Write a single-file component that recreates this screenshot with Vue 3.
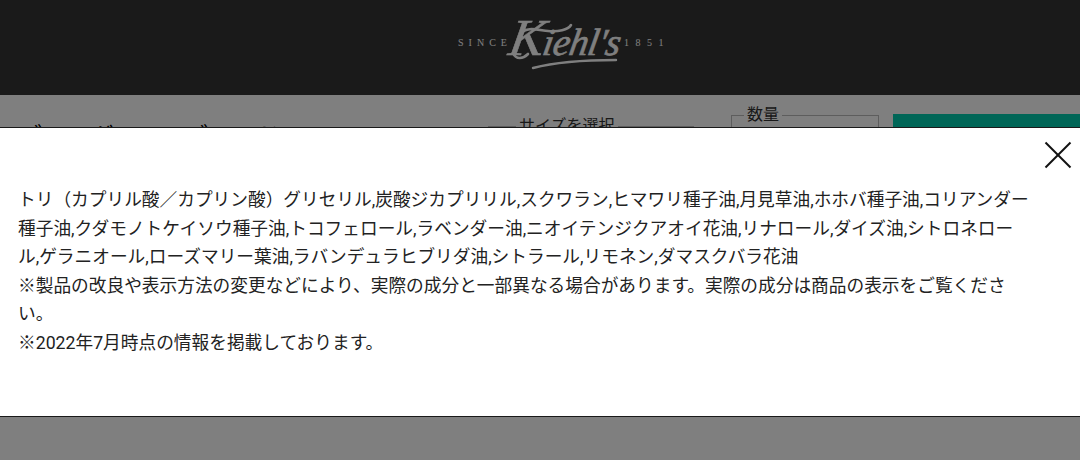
<template>
  <div class="page">
    <header class="site-header">
      <span class="since">SINCE</span>
      <div class="logo">
        <span class="logo-name"><span class="logo-cap">K</span>iehl's</span>
        <svg class="logo-swash" width="120" height="60" viewBox="0 0 120 60" fill="none">
          <path d="M10 18C15 10 27 14 37 15C47 16 57 14 60 9" stroke="currentColor" stroke-width="2.6" stroke-linecap="round" />
          <path d="M2 37C5 44 12 43 17 38" stroke="currentColor" stroke-width="2.6" stroke-linecap="round" />
          <path d="M22 52C45 46 78 44 105 44" stroke="currentColor" stroke-width="2.4" stroke-linecap="round" />
        </svg>
      </div>
      <span class="since year">1851</span>
    </header>

    <main class="product">
      <h1 class="product-name">ブルーグリーンブレンド</h1>
      <div class="product-actions">
        <fieldset class="picker picker-size">
          <legend>サイズを選択</legend>
        </fieldset>
        <fieldset class="picker picker-qty">
          <legend>数量</legend>
        </fieldset>
        <button class="cart-btn" type="button"></button>
      </div>
    </main>

    <div class="overlay">
      <div class="modal">
        <button class="close-btn" type="button" aria-label="閉じる">
          <svg width="28" height="28" viewBox="0 0 28 28" fill="none" stroke="currentColor" stroke-width="2">
            <line x1="1.5" y1="1.5" x2="26.5" y2="26.5"></line>
            <line x1="26.5" y1="1.5" x2="1.5" y2="26.5"></line>
          </svg>
        </button>
        <p class="modal-text">
          トリ（カプリル酸／カプリン酸）グリセリル,炭酸ジカプリリル,スクワラン,ヒマワリ種子油,月見草油,ホホバ種子油,コリアンダー種子油,クダモノトケイソウ種子油,トコフェロール,ラベンダー油,ニオイテンジクアオイ花油,リナロール,ダイズ油,シトロネロール,ゲラニオール,ローズマリー葉油,ラバンデュラヒブリダ油,シトラール,リモネン,ダマスクバラ花油<br />
          ※製品の改良や表示方法の変更などにより、実際の成分と一部異なる場合があります。実際の成分は商品の表示をご覧ください。<br />
          ※2022年7月時点の情報を掲載しております。
        </p>
      </div>
    </div>
  </div>
</template>

<script setup>
</script>

<style>
html,
body {
  margin: 0;
  background: #fff;
}
</style>

<style scoped>
.page {
  position: relative;
  width: 1080px;
  height: 460px;
  overflow: hidden;
  background: #fff;
  font-family: Roboto, "Noto Sans CJK JP", sans-serif;
  color: #222;
}

.site-header {
  height: 95px;
  background: #343434;
  color: #fff;
  display: flex;
  align-items: center;
  justify-content: center;
  gap: 2px;
  padding: 0 0 11px 48px;
  box-sizing: border-box;
}

.since {
  font-family: "Liberation Serif", serif;
  font-size: 10px;
  letter-spacing: 5px;
  padding-top: 1px;
}

.year {
  letter-spacing: 6.5px;
}

.logo {
  position: relative;
  width: 108px;
  height: 52px;
  display: flex;
  align-items: center;
  justify-content: center;
}

.logo-name {
  font-family: "Liberation Serif", serif;
  font-style: italic;
  font-weight: 400;
  font-size: 38px;
  line-height: 1;
  letter-spacing: -0.5px;
  white-space: nowrap;
  -webkit-text-stroke: 0.6px currentColor;
  transform: translate(-2px, -3px) skewX(-10deg);
}

.logo-cap {
  font-size: 52px;
  line-height: 0.8;
}

.logo-swash {
  position: absolute;
  left: -3px;
  top: 0;
}

.product {
  display: flex;
  justify-content: space-between;
  padding: 19px 0 0 18px;
}

.product-name {
  margin: 5px 0 0;
  font-size: 24px;
  line-height: 36px;
  font-weight: 400;
  color: #000;
}

.product-actions {
  display: flex;
  align-items: flex-start;
  gap: 14px;
}

.picker {
  margin: 0;
  padding: 0 12px;
  border: 1px solid #bbb;
  height: 60px;
  box-sizing: border-box;
}

.picker legend {
  padding: 0 3px;
  font-size: 16px;
  line-height: 20px;
  color: #333;
}

.picker-size {
  width: 206px;
  margin-top: 2px;
  margin-right: 23px;
}

.picker-size legend {
  margin-left: 15px;
}

.picker-qty {
  width: 148px;
  margin-top: -9px;
}

.cart-btn {
  width: 187px;
  height: 60px;
  border: none;
  background: #00cdaf;
}

.overlay {
  position: absolute;
  inset: 0;
  background: rgba(0, 0, 0, 0.5);
  padding-top: 127px;
  box-sizing: border-box;
}

.modal {
  position: relative;
  height: 290px;
  box-sizing: border-box;
  background: #fff;
  border-top: 1px solid #1a1a1a;
  border-bottom: 1px solid #1a1a1a;
  padding: 58px 49px 0 18px;
}

.close-btn {
  position: absolute;
  top: 13px;
  right: 8px;
  width: 28px;
  height: 28px;
  padding: 0;
  border: none;
  background: none;
  color: #111;
  display: flex;
}

.modal-text {
  margin: 0;
  font-size: 17.7px;
  line-height: 28.6px;
  color: #222;
}
</style>
